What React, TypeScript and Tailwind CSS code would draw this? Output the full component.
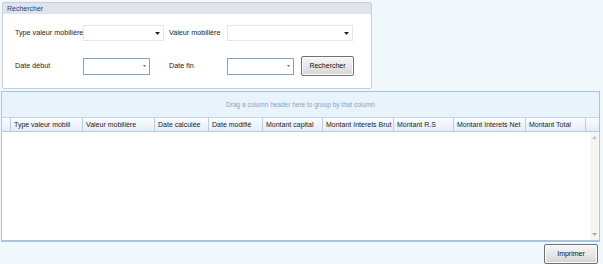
import React from "react";

const font = { fontFamily: '"Liberation Sans", Arial, sans-serif' };

const columns = [
  { label: "Type valeur mobili", w: "w-[72px]" },
  { label: "Valeur mobilière", w: "w-[72px]" },
  { label: "Date calculée", w: "w-[54px]" },
  { label: "Date modifié", w: "w-[54px]" },
  { label: "Montant capital", w: "w-[60px]" },
  { label: "Montant Interets Brut", w: "w-[71px]" },
  { label: "Montant R.S", w: "w-[60px]" },
  { label: "Montant Interets Net", w: "w-[72px]" },
  { label: "Montant Total", w: "w-[60px]" },
];

function Combo({ w }: { w: string }) {
  return (
    <div className={`${w} h-[16px] bg-white border border-[#e3e6ea] flex items-center justify-end pr-[3px]`}>
      <svg width="5" height="3" viewBox="0 0 5 3">
        <path d="M0 0h5L2.5 3z" fill="#222" />
      </svg>
    </div>
  );
}

function DateBox() {
  return (
    <div className="w-[67px] h-[17px] bg-white border border-[#7fa3d3] flex items-center justify-end pr-[3px]">
      <svg width="3" height="2" viewBox="0 0 3 2">
        <path d="M0 0h3L1.5 2z" fill="#5a6f90" />
      </svg>
    </div>
  );
}

function Btn({ label, w }: { label: string; w: string }) {
  return (
    <div
      className={`${w} h-[20px] rounded-[2px] border border-[#707070] bg-gradient-to-b from-[#f6f6f6] via-[#e8e8e8] to-[#d4d4d4] flex items-center justify-center text-[7px] text-[#111] shadow-[inset_0_0_0_1px_#fcfcfc]`}
    >
      {label}
    </div>
  );
}

export default function App() {
  return (
    <div style={font} className="w-[603px] h-[264px] bg-[#f1f8fc] flex flex-col text-[#1a1a1a] overflow-hidden">
      {/* search group */}
      <div className="ml-[2px] mt-[2px] w-[370px] h-[87px] border border-[#c9ced6] rounded-[2px] bg-white flex flex-col">
        <div className="h-[11px] bg-[#dfe4ec] text-[7px] leading-[11px] text-[#23407a] pl-[4px]">Rechercher</div>
        <div className="flex items-center mt-[11px] h-[16px] text-[7.2px] whitespace-nowrap">
          <span className="w-[68px] ml-[12px]">Type valeur mobilière</span>
          <Combo w="w-[81px]" />
          <span className="w-[58px] ml-[5px]">Valeur mobilière</span>
          <Combo w="w-[126px]" />
        </div>
        <div className="flex items-center mt-[15px] h-[20px] text-[7.2px] whitespace-nowrap">
          <span className="w-[68px] ml-[12px]">Date début</span>
          <DateBox />
          <span className="w-[58px] ml-[19px]">Date fin</span>
          <DateBox />
          <div className="ml-[7px]">
            <Btn label="Rechercher" w="w-[53px]" />
          </div>
        </div>
      </div>

      {/* grid */}
      <div className="ml-[1px] mt-[2px] w-[599px] h-[151px] border border-[#a9c3e3] border-b-2 bg-white flex flex-col">
        <div className="h-[26px] bg-[#e8f3fc] border-b border-[#c2d6ee] flex items-center justify-center text-[6.5px] text-[#8aa2c4]">
          Drag a column header here to group by that column
        </div>
        <div className="h-[14px] flex bg-gradient-to-b from-[#fbfdff] to-[#e3edf8] border-b border-[#b4cbe6] text-[7px] leading-[14px] text-[#222]">
          <div className="w-[9px] border-r border-[#b9cfe9]" />
          {columns.map((c) => (
            <div key={c.label} className={`${c.w} shrink-0 border-r border-[#b9cfe9] pl-[3px] overflow-hidden whitespace-nowrap`}>
              {c.label}
            </div>
          ))}
          <div className="flex-1" />
        </div>
        <div className="flex-1 flex">
          <div className="flex-1" />
          <div className="w-[8px] bg-[#f5f5f5] flex flex-col items-center justify-between py-[4px] mr-[1px]">
            <svg width="5" height="3" viewBox="0 0 5 3">
              <path d="M0 3h5L2.5 0z" fill="#c4c4c4" />
            </svg>
            <svg width="5" height="3" viewBox="0 0 5 3">
              <path d="M0 0h5L2.5 3z" fill="#a8a8a8" />
            </svg>
          </div>
        </div>
      </div>

      {/* footer */}
      <div className="flex justify-end mt-[2px] mr-[5px]">
        <Btn label="Imprimer" w="w-[54px]" />
      </div>
    </div>
  );
}
